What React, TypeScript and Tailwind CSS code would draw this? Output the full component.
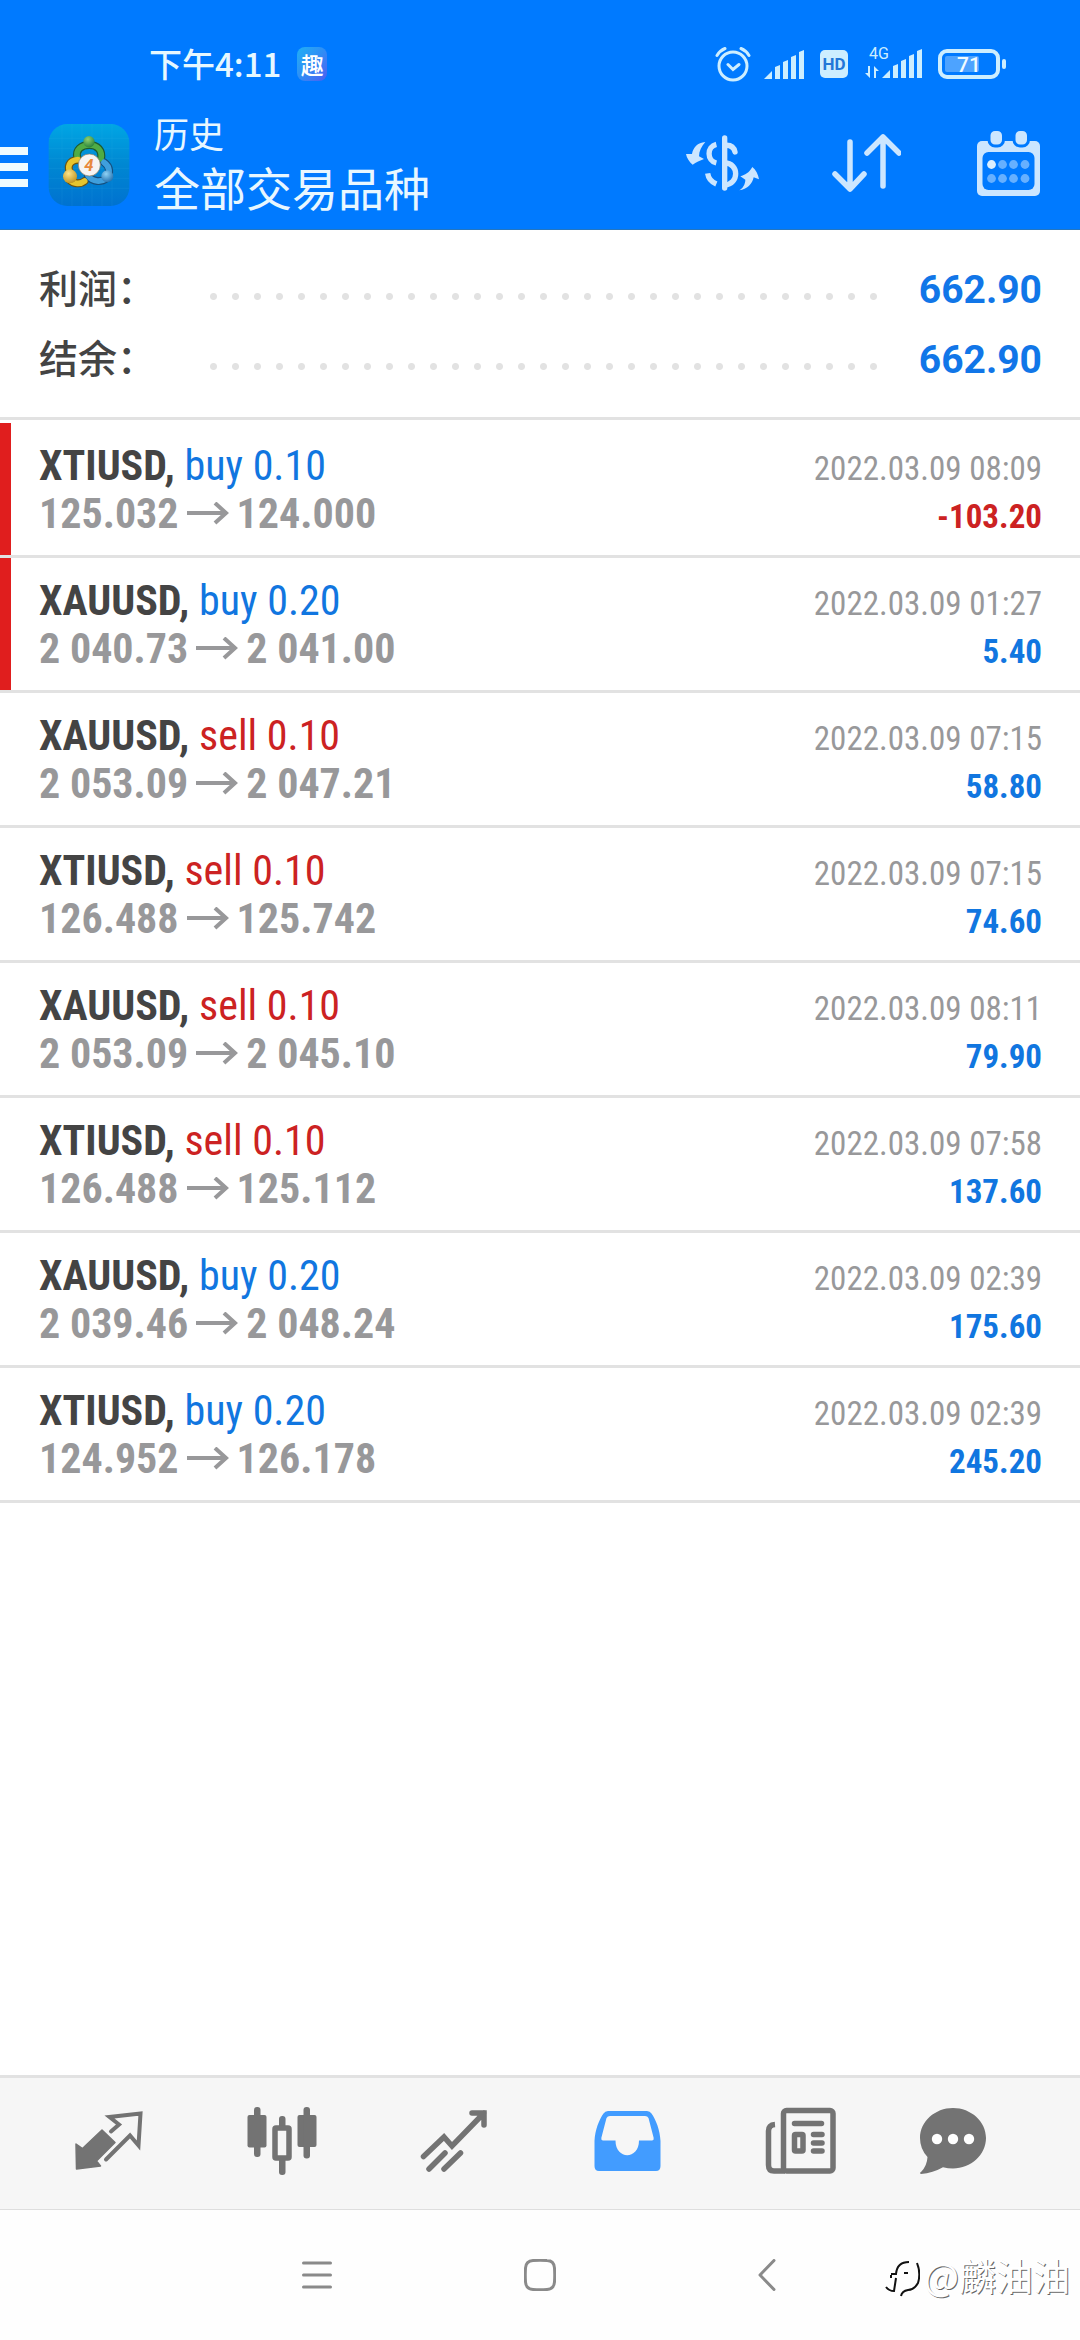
import React from "react";
import clsx from "clsx";

interface Deal {
  symbol: string;
  side: "buy" | "sell";
  volume: string;
  open: string;
  close: string;
  time: string;
  profit: string;
  marked?: boolean;
}

const deals: Deal[] = [
  { symbol: "XTIUSD", side: "buy", volume: "0.10", open: "125.032", close: "124.000", time: "2022.03.09 08:09", profit: "-103.20", marked: true },
  { symbol: "XAUUSD", side: "buy", volume: "0.20", open: "2 040.73", close: "2 041.00", time: "2022.03.09 01:27", profit: "5.40", marked: true },
  { symbol: "XAUUSD", side: "sell", volume: "0.10", open: "2 053.09", close: "2 047.21", time: "2022.03.09 07:15", profit: "58.80" },
  { symbol: "XTIUSD", side: "sell", volume: "0.10", open: "126.488", close: "125.742", time: "2022.03.09 07:15", profit: "74.60" },
  { symbol: "XAUUSD", side: "sell", volume: "0.10", open: "2 053.09", close: "2 045.10", time: "2022.03.09 08:11", profit: "79.90" },
  { symbol: "XTIUSD", side: "sell", volume: "0.10", open: "126.488", close: "125.112", time: "2022.03.09 07:58", profit: "137.60" },
  { symbol: "XAUUSD", side: "buy", volume: "0.20", open: "2 039.46", close: "2 048.24", time: "2022.03.09 02:39", profit: "175.60" },
  { symbol: "XTIUSD", side: "buy", volume: "0.20", open: "124.952", close: "126.178", time: "2022.03.09 02:39", profit: "245.20" },
];

const summary = [
  { label: "利润：", value: "662.90" },
  { label: "结余：", value: "662.90" },
];

/* ---------- Status bar ---------- */

const SignalBars = () => (
  <svg width="40" height="30" viewBox="0 0 40 30" fill="currentColor">
    <path d="M0 30l8-8v8ZM11 18l5-2v14h-5ZM19 13l5-2v19h-5ZM27 8l5-2v24h-5ZM35 3l5-2v29h-5Z" />
  </svg>
);

const StatusBar = () => (
  <div className="flex h-[110px] items-center pt-[18px] pr-[74px] pl-[149px] text-[#cdeeff]">
    <span className="pb-[2px] text-[33px] leading-10 font-medium text-[#e6f8ff]">下午4:11</span>
    <span className="ml-4 flex h-[34px] w-[30px] items-center justify-center rounded-lg bg-gradient-to-br from-[#1fb0f5] via-[#2f8df5] to-[#4a5cf0] text-[23px] leading-none font-medium text-white">
      趣
    </span>
    <div className="ml-auto flex items-center">
      <svg width="36" height="36" viewBox="0 0 36 36" fill="none" stroke="currentColor" strokeWidth="3" strokeLinecap="round">
        <circle cx="18" cy="20" r="14" />
        <path d="M13 18.500l5 5 6-5M2 9.500q3-5 8-7M34 9.500q-3-5-8-7" />
      </svg>
      <span className="ml-[13px]">
        <SignalBars />
      </span>
      <svg className="ml-4" width="28" height="28" viewBox="0 0 28 28">
        <rect width="28" height="28" rx="5" fill="#cdeeff" />
        <text x="14" y="20" textAnchor="middle" fontSize="17" fontWeight="700" fill="#2277d8" fontFamily="Roboto, sans-serif">
          HD
        </text>
      </svg>
      <svg className="ml-[17px]" width="57" height="44" viewBox="0 -6 57 44" fill="currentColor">
        <text x="4" y="11" fontSize="16" fontFamily="Roboto, sans-serif">
          4G
        </text>
        <path d="M3 18h2v12L0 25h3ZM9 30V18l5 5h-3v7Z" />
        <path d="M17 30l8-8v8ZM28 18l5-2v14h-5ZM36 13l5-2v19h-5ZM44 8l5-2v24h-5ZM52 3l5-2v29h-5Z" />
      </svg>
      <svg className="ml-4" width="68" height="30" viewBox="0 0 68 30">
        <rect x="2" y="2" width="58" height="26" rx="7" fill="none" stroke="#cdeeff" strokeWidth="4" />
        <rect x="7" y="7" width="34" height="16" rx="2" fill="#4da3ff" />
        <rect x="64" y="10" width="4" height="10" rx="2" fill="#cdeeff" />
        <text x="31" y="23" textAnchor="middle" fontSize="21" fontWeight="500" fill="#f0fbff" fontFamily="Roboto, sans-serif">
          71
        </text>
      </svg>
    </div>
  </div>
);

/* ---------- Header ---------- */

const AppLogo = () => (
  <svg width="82" height="82" viewBox="24 27 242 246">
    <defs>
      <linearGradient id="logoBg" x1="0" y1="0" x2="0" y2="1">
        <stop offset="0" stopColor="#00a6e4" />
        <stop offset="0.5" stopColor="#0087d2" />
        <stop offset="1" stopColor="#0072d0" />
      </linearGradient>
      <radialGradient id="logoGreen" cx="0.4" cy="0.3" r="0.8">
        <stop offset="0" stopColor="#8fd070" />
        <stop offset="1" stopColor="#1d7a35" />
      </radialGradient>
      <radialGradient id="logoGold" cx="0.4" cy="0.3" r="0.8">
        <stop offset="0" stopColor="#fbe48a" />
        <stop offset="1" stopColor="#b98a12" />
      </radialGradient>
      <radialGradient id="logoBlue" cx="0.4" cy="0.3" r="0.8">
        <stop offset="0" stopColor="#8fd2f5" />
        <stop offset="1" stopColor="#1766a8" />
      </radialGradient>
    </defs>
    <rect x="24" y="27" width="242" height="246" rx="56" fill="url(#logoBg)" />
    <path
      d="M64 30v240M94 27v246M124 27v246M154 27v246M184 27v246M214 27v246M24 70h242M24 100h242M24 130h242M24 160h242M24 190h242M24 220h242"
      stroke="#4cc4ee"
      strokeWidth="1"
      opacity="0.3"
    />
    <g fill="none" strokeLinecap="round">
      <path d="M110 128C104 104 122 90 146 90s40 16 35 42" stroke="#1c5a30" strokeWidth="24" />
      <path d="M92 178c-16-22-6-42 20-44M86 194c14 14 34 14 46 4" stroke="#6b5310" strokeWidth="24" />
      <path d="M190 142c20 14 18 34 8 48-16 12-42 12-56-8" stroke="#154f7e" strokeWidth="24" />
      <path d="M110 128C104 104 122 90 146 90s40 16 35 42" stroke="#4fac45" strokeWidth="17" />
      <path d="M92 178c-16-22-6-42 20-44M86 194c14 14 34 14 46 4" stroke="#e6c52e" strokeWidth="17" />
      <path d="M190 142c20 14 18 34 8 48-16 12-42 12-56-8" stroke="#3f9fdd" strokeWidth="17" />
    </g>
    <circle cx="145" cy="80" r="17" fill="url(#logoGreen)" />
    <circle cx="88" cy="184" r="21" fill="url(#logoGold)" />
    <circle cx="200" cy="184" r="18" fill="url(#logoBlue)" />
    <circle cx="146" cy="150" r="33" fill="#f6f4f2" stroke="#8a7a60" strokeWidth="2" />
    <text x="145" y="168" textAnchor="middle" fontSize="50" fontStyle="italic" fontWeight="700" fill="#e8893c" fontFamily="Roboto, sans-serif">
      4
    </text>
  </svg>
);

const CurrencyIcon = () => (
  <svg width="73" height="56" viewBox="18 31 219 168" fill="none" stroke="#cce6ff" strokeWidth="16">
    <path d="M134 40v150" strokeLinecap="round" />
    <path d="M109 59C80 66 80 108 109 115" />
    <path d="M134 62c18-2 28 6 31 20" strokeLinecap="round" />
    <path d="M134 115c44 0 44 64 0 66" />
    <path d="M83 146c2 14 12 26 26 32" />
    <g fill="#cce6ff" stroke="none">
      <path d="M76 52C52 54 40 68 36 88L18 88c2 12 10 24 20 32 10-8 22-12 34-17L57 95c0-16 8-30 19-43Z" />
      <path d="M178 197c10-6 18-18 18-32L181 155c14-5 26-10 36-28 10 8 18 22 20 37l-16-6c-4 20-20 36-43 39Z" />
    </g>
  </svg>
);

const SortIcon = () => (
  <svg width="70" height="60" viewBox="0 0 70 60" fill="none" stroke="#cce6ff" strokeWidth="5.500" strokeLinecap="round" strokeLinejoin="round">
    <path d="M19 9v47M4 41l15 15 14-15M52 53V4M36 20 52 4l16 16" />
  </svg>
);

const CalendarIcon = () => (
  <svg width="65" height="67" viewBox="0 0 65 67">
    <rect x="1" y="11" width="63" height="55" rx="5" fill="#cce6ff" />
    <rect x="6.500" y="22" width="52" height="38" rx="6" fill="#007aff" />
    {[14.5, 39.5].map((x) => (
      <rect key={x} x={x - 1.5} y="-0.500" width="14.500" height="16.500" rx="6" fill="#cce6ff" stroke="#007aff" strokeWidth="3" />
    ))}
    {[15.5, 26.5, 37.5, 49].map((x, i) => (
      <g key={x} fill="#66b0ff">
        <circle cx={x} cy="34.500" r="4.400" fill={i === 0 ? "#dceffe" : "#66b0ff"} />
        <circle cx={x} cy="48.500" r="4.400" />
      </g>
    ))}
  </svg>
);

const Header = () => (
  <header className="border-b border-[#2476c0] bg-[#007aff]">
    <StatusBar />
    <div className="flex items-center pb-[9px]">
      <button type="button" aria-label="菜单" className="flex w-7 flex-col gap-2 pt-1">
        <span className="h-2 bg-[#eefbff]" />
        <span className="h-2 bg-[#eefbff]" />
        <span className="h-2 bg-[#eefbff]" />
      </button>
      <span className="ml-5">
        <AppLogo />
      </span>
      <div className="ml-6 pb-1 text-[#e8f7ff]">
        <p className="text-[35px] leading-[46px]">历史</p>
        <h1 className="text-[46px] leading-[60px]">全部交易品种</h1>
      </div>
      <div className="ml-auto flex pb-1">
        <button type="button" aria-label="货币" className="flex w-[143px] items-center justify-center">
          <CurrencyIcon />
        </button>
        <button type="button" aria-label="排序" className="flex w-[143px] items-center justify-center">
          <SortIcon />
        </button>
        <button type="button" aria-label="日期" className="flex w-[143px] items-center justify-center">
          <CalendarIcon />
        </button>
      </div>
    </div>
  </header>
);

/* ---------- History ---------- */

const DealRow: React.FC<{ deal: Deal }> = ({ deal }) => (
  <li className="flex border-b-[3px] border-[#e2e2e2]">
    <span className={clsx("w-[11px]", deal.marked && "bg-[#e01e1e]")} />
    <div className="flex-1 pt-[19px] pr-[38px] pb-[17px] pl-7 font-['Roboto_Condensed',sans-serif] leading-[48px]">
      <div className="flex h-12 items-baseline justify-between">
        <p className="text-[42px]">
          <span className="font-bold text-[#444]">{deal.symbol}, </span>
          <span className={deal.side === "buy" ? "text-[#1176e0]" : "text-[#cc2222]"}>
            {deal.side} {deal.volume}
          </span>
        </p>
        <time className="text-[33px] text-[#98989a]">{deal.time}</time>
      </div>
      <div className="flex h-12 items-baseline justify-between font-bold">
        <p className="flex items-center gap-2 text-[42px] text-[#98989a]">
          {deal.open}
          <svg width="42" height="24" viewBox="0 0 42 24" fill="none" stroke="currentColor" strokeWidth="4">
            <path d="M0 11h39M28 1l11 10-11 10" />
          </svg>
          {deal.close}
        </p>
        <span className={clsx("text-[33px]", deal.profit.startsWith("-") ? "text-[#cc2222]" : "text-[#1176e0]")}>
          {deal.profit}
        </span>
      </div>
    </div>
  </li>
);

/* ---------- Bottom tabs ---------- */

const tabs = [
  {
    name: "行情",
    icon: (
      <svg width="68" height="60" viewBox="0 0 68 60">
        <path d="M1 33l6.500 4.500L27 19l13 12.500L21.500 50l4 5L1.500 58Z" fill="#737373" stroke="#737373" strokeWidth="1.500" strokeLinejoin="round" />
        <path d="M36 20.500l8-7L34.500 6l31-3.500-2 32L55 24.500 31 48.500" fill="none" stroke="#737373" strokeWidth="4" strokeLinecap="round" />
      </svg>
    ),
  },
  {
    name: "图表",
    icon: (
      <svg width="70" height="70" viewBox="0 0 70 70" fill="#737373">
        <rect x="0.500" y="9" width="19" height="32.500" rx="2" />
        <rect x="7" y="1" width="6.500" height="50" rx="3" />
        <rect x="50.500" y="9" width="19" height="32" rx="2" />
        <rect x="56.500" y="1" width="6.500" height="51.500" rx="3" />
        <rect x="32" y="10" width="6.500" height="59" rx="3" />
        <rect x="28" y="22" width="14" height="30" rx="1" fill="#f6f6f6" stroke="#737373" strokeWidth="5.500" />
      </svg>
    ),
  },
  {
    name: "交易",
    icon: (
      <svg width="70" height="64" viewBox="0 0 70 64" fill="none" stroke="#737373" strokeWidth="5.500" strokeLinecap="round">
        <path d="M3.500 47.500 24 28l8 9L64 4M52 4h12v12M9 60l16-16M24 60l16.500-16" />
      </svg>
    ),
  },
  {
    name: "历史",
    icon: (
      <svg width="67" height="62" viewBox="0 0 67 62">
        <path
          d="M.500 31C1 20 5 10 9.500 3.500Q11 1 14 1H53Q56 1 57.500 3.500C62 10 66 20 66.500 31V56Q66.500 61 62 61H5Q.500 61 .500 56ZM16 6Q13.500 6 12.500 8L7.300 28Q7 30.500 9 30.500H21.500C21.500 50 45 50 45 30.500H58Q60 30.500 59.700 28L54.500 8Q53.500 6 51 6Z"
          fill="#429cff"
          fillRule="evenodd"
        />
      </svg>
    ),
  },
  {
    name: "新闻",
    icon: (
      <svg width="71" height="68" viewBox="0 0 71 68" fill="none" stroke="#737373" strokeWidth="5.500" strokeLinecap="round">
        <rect x="18.500" y="3.500" width="49.500" height="60.500" rx="3" />
        <path d="M10 17.500Q3.500 18 3.500 24V58Q3.500 64 9 64H20" strokeLinecap="butt" />
        <path d="M29.500 16.500h27M48.500 27.500h8.500M48.500 36h8.500M48.500 44h8.500" />
        <rect x="29.500" y="27.500" width="8.500" height="16.500" rx="1" />
      </svg>
    ),
  },
  {
    name: "消息",
    icon: (
      <svg width="68" height="68" viewBox="0 0 68 68">
        <path d="M34 1C52 1 67 14.500 67 31S52 61.500 34 61.500Q29 61.500 24 60.300 14 66 2 67 0 66 2 65 8 59 8.500 50 1 42 1 31C1 14.500 16 1 34 1Z" fill="#737373" />
        <circle cx="18" cy="32" r="5.200" fill="#fff" />
        <circle cx="34" cy="32" r="5.200" fill="#fff" />
        <circle cx="50" cy="32" r="5.200" fill="#fff" />
      </svg>
    ),
  },
];

const SystemNav = () => (
  <div className="grid h-[130px] grid-cols-[204fr_226fr_220fr_234fr_196fr] items-center bg-[#fefefe] text-[#8a8a8a]">
    <span />
    <button type="button" aria-label="最近任务" className="flex justify-center">
      <svg width="30" height="30" viewBox="0 0 30 30" stroke="currentColor" strokeWidth="3" strokeLinecap="round">
        <path d="M1.500 3h27M1.500 15h27M1.500 27h27" />
      </svg>
    </button>
    <button type="button" aria-label="主页" className="flex justify-center">
      <svg width="32" height="32" viewBox="0 0 32 32" fill="none" stroke="currentColor" strokeWidth="3">
        <path d="M9 1.500Q16 1 23 1.500 30 1.500 30.500 9 31 16 30.500 23 30 30 23 30.500 16 31 9 30.500 2 30 1.500 23 1 16 1.500 9 2 2 9 1.500Z" />
      </svg>
    </button>
    <button type="button" aria-label="返回" className="flex justify-center">
      <svg width="18" height="32" viewBox="0 0 18 32" fill="none" stroke="currentColor" strokeWidth="3" strokeLinecap="round" strokeLinejoin="round">
        <path d="M16 1.500 2 16l14 14.500" />
      </svg>
    </button>
    <p className="flex items-center text-[37px] leading-none whitespace-nowrap text-white [text-shadow:1px_1px_0_#666]">
      <svg className="mt-2 mr-1" width="36" height="38" viewBox="0 0 36 38" fill="none" stroke="#111" strokeWidth="2">
        <path d="M7 14h5q1-12 13-12M20 13h4M33 3q4 10 1 20-4 7-10 7-6 1-7 6M7 15v3M12 18l-2 13q-5 0-8-4" />
      </svg>
      @麟油油
    </p>
  </div>
);

const App: React.FC = () => {
  return (
    <div className="flex min-h-screen flex-col bg-white font-['Noto_Sans_CJK_SC',sans-serif]">
      <Header />

      <main className="flex-1">
        <dl className="border-b-[3px] border-[#e2e2e2] pt-6 pr-[38px] pb-[23px] pl-[39px]">
          {summary.map((item) => (
            <div key={item.label} className="flex h-[70px] items-baseline">
              <dt className="w-[171px] text-[39px] leading-[64px] font-medium text-[#444]">{item.label}</dt>
              <span className="mt-[15px] h-[7px] flex-1 self-center bg-[radial-gradient(circle_at_3.5px_3.5px,#e2e2e2_3px,transparent_4px)] bg-[length:22px_7px] bg-repeat-x" />
              <dd className="w-[165px] text-right font-['Roboto',sans-serif] text-[39px] leading-[64px] font-bold text-[#1176e8]">
                {item.value}
              </dd>
            </div>
          ))}
        </dl>

        <ul className="pt-[3px]">
          {deals.map((deal, i) => (
            <DealRow key={i} deal={deal} />
          ))}
        </ul>
      </main>

      <nav className="grid h-[135px] grid-cols-[173fr_173fr_173fr_173fr_173fr_132fr] items-center border-t-[3px] border-b border-t-[#e2e2e2] border-b-[#dedede] bg-[#f6f6f6] pr-[61px] pb-[5px] pl-[22px]">
        {tabs.map((tab) => (
          <button key={tab.name} type="button" aria-label={tab.name} className="flex justify-center">
            {tab.icon}
          </button>
        ))}
      </nav>
      <SystemNav />
    </div>
  );
};

export default App;
